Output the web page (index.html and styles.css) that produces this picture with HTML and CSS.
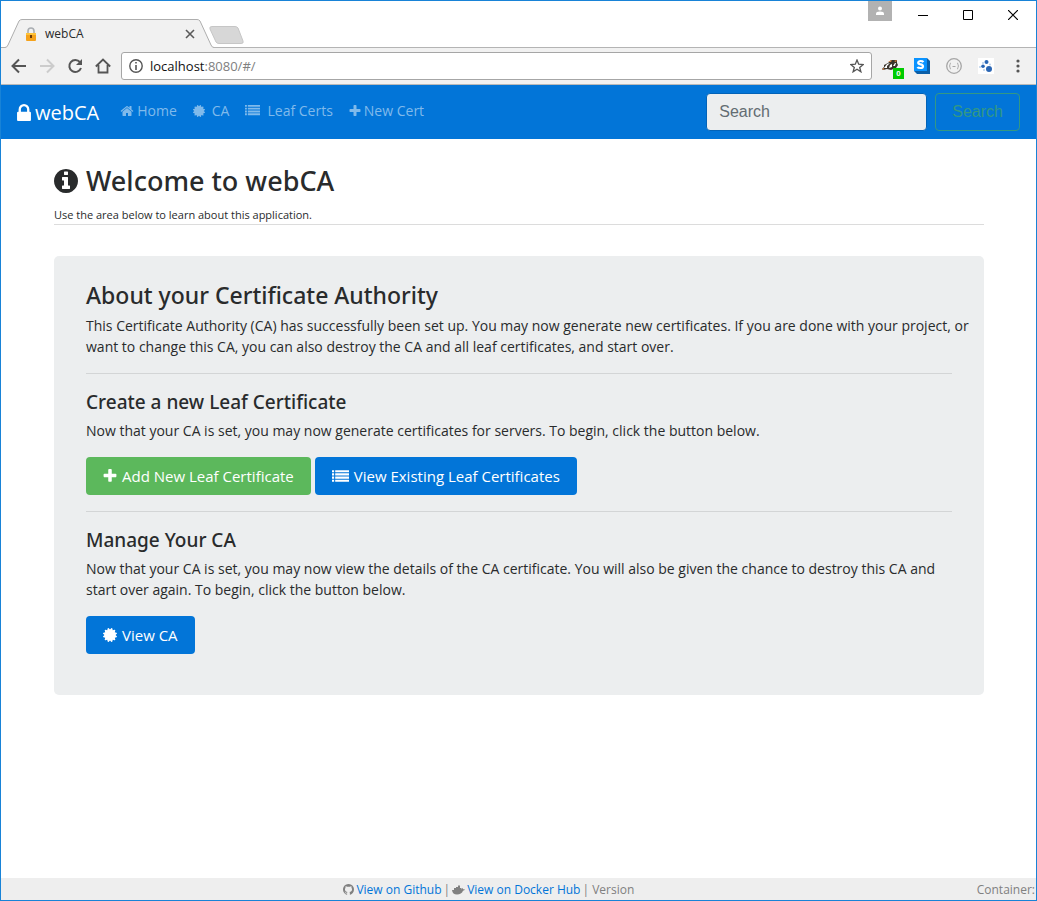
FILE: index.html
```html
<!DOCTYPE html>
<html lang="en">
<head>
<meta charset="utf-8">
<title>webCA</title>
<link rel="stylesheet" href="styles.css">
</head>
<body>
<svg class="sprite" aria-hidden="true">
  <symbol id="lock" viewBox="320 128 1152 1408"><path d="M640 768h512v-192q0-106-75-181t-181-75-181 75-75 181v192zm832 96v576q0 40-28 68t-68 28h-960q-40 0-68-28t-28-68v-576q0-40 28-68t68-28h32v-192q0-184 132-316t316-132 316 132 132 316v192h32q40 0 68 28t28 68z"/></symbol>
  <symbol id="home" viewBox="0 0 1792 1792"><path d="M1472 992v480q0 26-19 45t-45 19h-384v-384h-256v384h-384q-26 0-45-19t-19-45v-480q0-1 .5-3t.5-3l575-474 575 474q1 2 1 6zm223-69l-62 74q-8 9-21 11h-3q-13 0-21-7l-692-577-692 577q-12 8-24 7-13-2-21-11l-62-74q-8-10-7-23.5t11-21.5l719-599q32-26 76-26t76 26l244 204v-195q0-14 9-23t23-9h192q14 0 23 9t9 23v408l219 182q10 8 11 21.5t-7 23.5z"/></symbol>
  <symbol id="cert" viewBox="128 128 1536 1536"><path d="M1504 896l138 135q30 28 20 70-12 41-52 51l-188 48 53 186q12 41-19 70-29 31-70 19l-186-53-48 188q-10 40-51 52-12 2-19 2-31 0-51-22l-135-138-135 138q-28 30-70 20-41-11-51-52l-48-188-186 53q-41 12-70-19-31-29-19-70l53-186-188-48q-40-10-52-51-10-42 20-70l138-135-138-135q-30-28-20-70 12-41 52-51l188-48-53-186q-12-41 19-70 29-31 70-19l186 53 48-188q10-41 51-51 41-12 70 19l135 139 135-139q29-30 70-19 41 10 51 51l48 188 186-53q41-12 70 19 31 29 19 70l-53 186 188 48q40 10 52 51 10 42-20 70z"/></symbol>
  <symbol id="list" viewBox="0 0 16 16"><path d="M0 2h2v2H0zM3 2h13v2H3zM0 5h2v2H0zM3 5h13v2H3zM0 8h2v2H0zM3 8h13v2H3zM0 11h2v2H0zM3 11h13v2H3z"/></symbol>
  <symbol id="plus" viewBox="192 128 1408 1536"><path d="M1600 736v192q0 40-28 68t-68 28h-416v416q0 40-28 68t-68 28h-192q-40 0-68-28t-28-68v-416h-416q-40 0-68-28t-28-68v-192q0-40 28-68t68-28h416v-416q0-40 28-68t68-28h192q40 0 68 28t28 68v416h416q40 0 68 28t28 68z"/></symbol>
  <symbol id="info" viewBox="128 128 1536 1536"><path d="M1152 1376v-160q0-14-9-23t-23-9h-96v-512q0-14-9-23t-23-9h-320q-14 0-23 9t-9 23v160q0 14 9 23t23 9h96v320h-96q-14 0-23 9t-9 23v160q0 14 9 23t23 9h448q14 0 23-9t9-23zm-128-896v-160q0-14-9-23t-23-9h-192q-14 0-23 9t-9 23v160q0 14 9 23t23 9h192q14 0 23-9t9-23zm640 416q0 209-103 385.5t-279.5 279.5-385.5 103-385.5-103-279.5-279.5-103-385.5 103-385.5 279.5-279.5 385.5-103 385.5 103 279.5 279.5 103 385.5z"/></symbol>
  <symbol id="github" viewBox="128 128 1536 1536"><path d="M896 128q209 0 385.5 103t279.5 279.5 103 385.5q0 251-146.5 451.5t-378.5 277.5q-27 5-40-7t-13-30q0-3 .5-76.5t.5-134.5q0-97-52-142 57-6 102.5-18t94-39 81-66.5 53-105 20.5-150.5q0-119-79-206 37-91-8-204-28-9-81 11t-92 44l-38 24q-93-26-192-26t-192 26q-16-11-42.5-27t-83.5-38.5-85-13.5q-45 113-8 204-79 87-79 206 0 85 20.5 150t52.5 105 80.5 67 94 39 102.5 18q-39 36-49 103-21 10-45 15t-57 5-65.5-21.5-55.5-62.5q-19-32-48.5-52t-49.5-24l-20-3q-21 0-29 4.5t-5 11.5 9 14 13 12l7 5q22 10 43.5 38t31.5 51l10 23q13 38 44 61.5t67 30 69.5 7 55.5-3.5l23-4q0 38 .5 88.5t.5 54.5q0 18-13 30t-40 7q-232-77-378.5-277.5t-146.5-451.5q0-209 103-385.5t279.5-279.5 385.5-103z"/></symbol>
  <symbol id="docker" viewBox="0 0 13 12"><path d="M0 6h2V4h2V3h2V1.500h2V4h1.500v1.500q.7-.2.500-1.500q1 .3 1.200 1.300q1-.2 1.800.2q-.5 1.100-2 1.200Q9.500 10.500 5 10.500Q.500 10.500 0 6z"/></symbol>
</svg>
<div class="window">
  <header class="tabstrip">
    <div class="tab">
      <svg class="tab-shape" width="213" height="30" viewBox="0 0 213 30" aria-hidden="true"><path d="M0 28.500H4Q6 28.500 7 26L18 2Q19 .500 21 .500H196Q198 .500 199 2L210 26Q211 28.500 213 28.500V30H0z" fill="#f1f1f1"/><path d="M0 28.500H4Q6 28.500 7 26L18 2Q19 .500 21 .500H196Q198 .500 199 2L210 26Q211 28.500 213 28.500" fill="none" stroke="#aeaeae"/></svg>
      <svg class="favicon" width="12" height="14" viewBox="0 0 12 14" aria-hidden="true"><path d="M3 7V4a3 3 0 0 1 6 0v3" fill="none" stroke="#a9adb1" stroke-width="1.600"/><rect x="1" y="6" width="10" height="8" rx="1" fill="#f5a21b"/><path d="M1 6h10v2H1z" fill="#fdc23a"/><path d="M5 8h2v3H5z" fill="#6b3a06"/></svg>
      <span class="tab-title">webCA</span>
      <button class="plain" aria-label="Close tab"><svg width="10" height="10" viewBox="0 0 10 10"><path d="M1 1l8 8M9 1L1 9" stroke="#5a5a5a" stroke-width="1.600"/></svg></button>
    </div>
    <button class="plain newtab" aria-label="New tab"><svg width="36" height="18" viewBox="0 0 36 18"><path d="M3 .500H26Q28 .500 29 2L34 15Q35 17.500 32 17.500H10Q8 17.500 7 16L1 3Q0 .500 3 .500z" fill="#d7d7d7" stroke="#c6c6c6"/></svg></button>
    <div class="window-controls">
      <button class="plain profile" aria-label="Profile"><svg width="10" height="10" viewBox="0 0 10 10"><circle cx="5" cy="2.500" r="2" fill="#fff"/><path d="M1 9V7.500Q1 5.500 5 5.500T9 7.500V9z" fill="#fff"/></svg></button>
      <button class="plain" aria-label="Minimize"><svg width="10" height="10" viewBox="0 0 10 10"><path d="M0 5.500h10" stroke="#000"/></svg></button>
      <button class="plain" aria-label="Maximize"><svg width="10" height="10" viewBox="0 0 10 10"><path d="M.500 .500h9v9h-9z" fill="none" stroke="#000"/></svg></button>
      <button class="plain" aria-label="Close"><svg width="10" height="10" viewBox="0 0 10 10"><path d="M0 0l10 10M10 0L0 10" stroke="#000" stroke-width="1.200"/></svg></button>
    </div>
  </header>
  <div class="toolbar">
    <button class="plain" aria-label="Back"><svg width="16" height="16" viewBox="0 0 16 16"><path d="M15 8H2M8 1.500L1.500 8 8 14.500" fill="none" stroke="#555" stroke-width="2"/></svg></button>
    <button class="plain" aria-label="Forward"><svg width="16" height="16" viewBox="0 0 16 16"><path d="M1 8h13M8 1.500L14.500 8 8 14.500" fill="none" stroke="#ccc" stroke-width="2"/></svg></button>
    <button class="plain" aria-label="Reload"><svg width="16" height="16" viewBox="0 0 16 16"><path d="M13 4.200A6 6 0 1 0 14 10" fill="none" stroke="#555" stroke-width="2"/><path d="M15 1v6H9z" fill="#555"/></svg></button>
    <button class="plain" aria-label="Home page"><svg width="16" height="16" viewBox="0 0 16 16"><path d="M.800 8.500L8 1.500l7.200 7M3.500 7v7.500h9V7" fill="none" stroke="#555" stroke-width="1.800"/></svg></button>
    <div class="omnibox">
      <svg width="14" height="14" viewBox="0 0 14 14" aria-hidden="true"><circle cx="7" cy="7" r="6.200" fill="none" stroke="#555" stroke-width="1.400"/><path d="M6.200 3h1.600v1.600H6.200zM6.200 6h1.600v5H6.200z" fill="#555"/></svg>
      <span class="url">localhost<span class="url-rest">:8080/#/</span></span>
      <button class="plain" aria-label="Bookmark"><svg width="14" height="14" viewBox="0 0 14 14"><path d="M7 1l1.700 4.200 4.500.300-3.500 2.900 1.200 4.400L7 10.300l-3.900 2.500 1.200-4.400L.800 5.500l4.500-.300z" fill="none" stroke="#555" stroke-width="1.300"/></svg></button>
    </div>
    <div class="extensions">
      <span class="badger"><svg width="16" height="14" viewBox="0 0 16 14" aria-hidden="true"><path d="M0 10l2-2 0-2 4-2 3-3 6 0 0 3 1 2-2 3-5 2-4-1-4 1z" fill="#3a342c"/><path d="M2 9l3-4 3-1-3 3 0 2zM7 9l1-3 2-1 0 3zM11 7l2-3 1 0-1 3z" fill="#fff"/><path d="M6 3l4-2-1 2zM12 2l3-1-1 2zM0 10l2-1 0 2z" fill="#e0813c"/></svg><span class="badge">0</span></span>
      <svg width="16" height="16" viewBox="0 0 16 16" aria-hidden="true"><path d="M0 0h13l3 3v13H3l-3-3z" fill="#0b5fa8"/><path d="M0 0h13v13H0z" fill="#0a93ff"/><path d="M9.500 4Q8.500 3 6.500 3T4.200 4.800Q4.200 6.100 6.500 6.400T9 8.200Q9 10 6.500 10T3.500 9" fill="none" stroke="#fff" stroke-width="2.200"/></svg>
      <svg width="16" height="16" viewBox="0 0 16 16" aria-hidden="true"><circle cx="8" cy="8" r="7.300" fill="none" stroke="#a6a6a6" stroke-width="1.300"/><path d="M5 5q-1 0-1 1.500T3.200 8q.8 0 .8 1.500T5 11M11 5q1 0 1 1.500t.8 1.500q-.8 0-.8 1.500T11 11M6.500 8.500h3" fill="none" stroke="#a6a6a6"/></svg>
      <svg width="16" height="16" viewBox="0 0 16 16" aria-hidden="true"><path d="M0 0h16v16H0z" fill="#fff"/><g fill="#2a66b4"><circle cx="8.500" cy="4" r="2"/><circle cx="5" cy="8.300" r="1.800"/><circle cx="11" cy="11" r="3"/></g><g fill="#b9cfea"><circle cx="2" cy="9" r="1"/><circle cx="5" cy="5" r="1"/><circle cx="12" cy="6.500" r="1"/><circle cx="6" cy="12" r="1"/></g></svg>
      <button class="plain" aria-label="Menu"><svg width="16" height="16" viewBox="0 0 16 16"><g fill="#555"><circle cx="8" cy="3" r="1.600"/><circle cx="8" cy="8" r="1.600"/><circle cx="8" cy="13" r="1.600"/></g></svg></button>
    </div>
  </div>
  <nav class="navbar">
    <a class="brand" href="#"><svg class="brand-icon"><use href="#lock"/></svg>webCA</a>
    <div class="links">
      <a href="#"><svg class="icon"><use href="#home"/></svg>Home</a>
      <a class="roomy" href="#"><svg class="icon-small"><use href="#cert"/></svg>CA</a>
      <a class="roomy" href="#"><svg class="icon-list"><use href="#list"/></svg>Leaf Certs</a>
      <a href="#"><svg class="icon-small"><use href="#plus"/></svg>New Cert</a>
    </div>
    <form class="search">
      <input type="text" placeholder="Search" aria-label="Search">
      <button type="button">Search</button>
    </form>
  </nav>
  <main class="page">
    <div class="heading">
      <h1><svg class="info-icon"><use href="#info"/></svg>Welcome to webCA</h1>
      <p class="lead">Use the area below to learn about this application.</p>
    </div>
    <section class="panel">
      <h2>About your Certificate Authority</h2>
      <p class="intro">This Certificate Authority (CA) has successfully been set up. You may now generate new certificates. If you are done with your project, or want to change this CA, you can also destroy the CA and all leaf certificates, and start over.</p>
      <hr>
      <h3>Create a new Leaf Certificate</h3>
      <p>Now that your CA is set, you may now generate certificates for servers. To begin, click the button below.</p>
      <div class="actions">
        <button class="btn btn-success"><svg class="icon"><use href="#plus"/></svg>Add New Leaf Certificate</button>
        <button class="btn"><svg class="icon-btn-list"><use href="#list"/></svg>View Existing Leaf Certificates</button>
      </div>
      <hr>
      <h3>Manage Your CA</h3>
      <p>Now that your CA is set, you may now view the details of the CA certificate. You will also be given the chance to destroy this CA and start over again. To begin, click the button below.</p>
      <div class="actions">
        <button class="btn"><svg class="icon"><use href="#cert"/></svg>View CA</button>
      </div>
    </section>
  </main>
  <footer class="footer">
    <div class="footer-links"><svg class="foot-icon"><use href="#github"/></svg> <a href="#">View on Github</a> | <svg class="foot-icon-wide"><use href="#docker"/></svg> <a href="#">View on Docker Hub</a> | Version</div>
    <div>Container:</div>
  </footer>
</div>
</body>
</html>
```
FILE: styles.css
```css
* { box-sizing: border-box; }
body { margin: 0; font: 14px/21px "Open Sans", "Noto Sans", sans-serif; color: #292b2c; background: #fff; }
svg { display: block; flex: none; fill: currentColor; }
.sprite { display: none; }
a { color: #0275d8; text-decoration: none; }
h1, h2, h3, p { margin: 0; }
h1, h2, h3 { font-family: "Noto Sans", "Open Sans", sans-serif; font-weight: 500; }
.plain { display: grid; place-items: center; padding: 0; border: 0; background: none; }

.window { display: flex; flex-direction: column; min-height: 100vh; border: 1px solid #1883d7; }

.tabstrip { display: flex; align-items: flex-end; height: 47px; border-bottom: 1px solid #b4b4b4; }
.tab { position: relative; display: flex; align-items: center; width: 208px; height: 29px; padding: 0 14px 0 24px; margin-bottom: -1px; font-size: 12px; }
.tab-shape { position: absolute; left: 0; top: 0; }
.favicon, .tab-title, .tab .plain { position: relative; }
.tab-title { flex: 1; margin-left: 8px; }
.newtab { align-self: flex-end; margin-bottom: 3px; }
.window-controls { display: flex; align-self: flex-start; margin-left: auto; padding-right: 1px; }
.window-controls .plain { width: 45px; height: 28px; }
.window-controls .profile { width: 24px; height: 20px; margin-right: 8px; background: #b2b2b2; }

.toolbar { display: flex; align-items: center; gap: 12px; height: 37px; padding: 0 10px; background: #f1f1f1; border-bottom: 1px solid #b9b9b9; }
.omnibox { display: flex; flex: 1; align-items: center; gap: 7px; height: 28px; padding: 0 7px; margin: 0 -2px; background: #fff; border: 1px solid #a6a6a6; border-radius: 3px; }
.url { flex: 1; font-size: 13px; color: #111; }
.url-rest { color: #808080; }
.extensions { display: flex; align-items: center; gap: 16px; }
.badger { position: relative; width: 16px; }
.badge { position: absolute; left: 11px; top: 9px; width: 11px; height: 11px; background: #0c0; color: #fff; font: bold 8px/11px "Liberation Sans", sans-serif; text-align: center; }

.navbar { display: flex; align-items: center; height: 54px; padding: 0 16px; background: #0275d8; }
.brand { display: flex; align-items: center; gap: 4px; font-size: 20px; color: #fff; }
.brand-icon { width: 14px; height: 17px; }
.links { display: flex; gap: 16px; margin-left: 21px; padding-bottom: 3px; }
.links a { display: flex; align-items: center; gap: 3px; color: #80baeb; }
.links .roomy { gap: 7px; }
.icon { width: 14px; height: 14px; }
.icon-list { width: 15px; height: 15px; }
.icon-small { width: 12px; height: 12px; }
.search { display: flex; align-items: center; gap: 8px; margin-left: auto; }
.search input { width: 221px; height: 38px; padding: 0 12px; font: 16px "Liberation Sans", sans-serif; color: #464a4c; background: #eceeef; border: 1px solid #0263b8; border-radius: 4px; }
.search input::placeholder { color: #636c72; opacity: 1; }
.search button { height: 38px; padding: 0 16px; font: 16px "Liberation Sans", sans-serif; color: #339884; background: none; border: 1px solid #339884; border-radius: 4px; }

.page { flex: 1; padding: 24px 52px 32px 53px; }
.heading { border-bottom: 1px solid #dcdcdc; }
h1 { display: flex; align-items: center; gap: 8px; font-size: 27px; line-height: 36px; }
.info-icon { width: 24px; height: 24px; }
.lead { padding-top: 6px; font-size: 11px; line-height: 19px; }
.panel { margin-top: 31px; padding: 25px 32px 41px; background: #eceeef; border-radius: 5px; }
.panel p { padding-bottom: 1px; }
.panel .intro { margin-right: -20px; }
h2 { margin-bottom: 6px; font-size: 23px; line-height: 28px; }
h3 { margin-bottom: 6px; font-size: 19px; line-height: 24px; }
hr { margin: 15px 0 16px; border: 0; border-top: 1px solid #d3d5d6; }
.actions { display: flex; gap: 4px; margin-top: 15px; }
.actions + hr { margin-top: 16px; }
.btn { display: flex; align-items: center; gap: 5px; height: 38px; padding: 0 17px; font: 15px "Open Sans", "Noto Sans", sans-serif; color: #fff; background: #0275d8; border: 0; border-radius: 4px; }
.btn-success { background: #5cb85c; }
.icon-btn-list { width: 17px; height: 17px; }

.footer { display: flex; height: 22px; padding: 1px 1px 0 0; font-size: 12px; line-height: 22px; color: #808080; background: #eee; }
.footer-links { display: flex; flex: 1; align-items: center; justify-content: center; gap: 2px; }
.foot-icon { width: 11px; height: 11px; }
.foot-icon-wide { width: 13px; height: 12px; }
```
